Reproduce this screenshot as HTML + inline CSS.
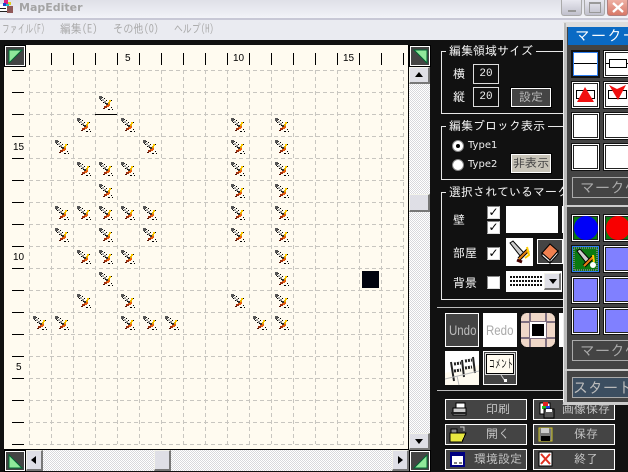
<!DOCTYPE html>
<html><head><meta charset="utf-8"><style>
html,body{margin:0;padding:0;width:628px;height:472px;overflow:hidden;background:#111}
body{position:relative;font-family:"Liberation Sans","IPAGothic","Noto Sans CJK JP",sans-serif}
div,span.a{position:absolute;box-sizing:border-box}
.jp{font-family:"IPAGothic","Noto Sans CJK JP",sans-serif;white-space:nowrap}
.w{color:#f4f4f4;font-size:12px;line-height:14px}
.m{top:22px;color:#aaa;font-size:12px;line-height:14px;transform-origin:0 0}
.g{border:1px solid #e8e8e8;left:441px;width:140px}
.lb{left:446px;background:#111;padding:0 3px;color:#f4f4f4;font-size:12px;line-height:14px;height:14px}
.in{left:473px;width:26px;height:20px;border:1px solid #ddd;color:#eee;font:11px/18px "Liberation Mono",monospace;text-align:center}
.ck{left:487px;width:13px;height:13px;background:#fff;border:1px solid #888;border-right-color:#ddd;border-bottom-color:#ddd;color:#000;font:bold 12px/11px "DejaVu Sans",sans-serif;text-align:center}
.bt{background:#444;border:1px solid #fff;outline:1px solid #000;color:#bbb;text-align:center;font-size:12px}
.b{width:82px;height:21px;background:#444;border:1px solid #fff;color:#c4c4c4;font-size:12px;line-height:19px}
.b span{position:absolute;top:0}
.t{width:29px;height:28px;background:#fff;border:1px solid #111;box-shadow:inset 0 0 0 1px #fff,inset 0 0 0 2px #222}
.p{background:#8080ff;box-shadow:inset 0 0 0 1px #fff,inset 0 0 0 2px #222}
.c{background:#0a7a12;box-shadow:inset 0 0 0 1px #fff,inset 0 0 0 2px #222}
.mk{left:572px;width:70px;height:21px;background:#444;border:1px solid #aaa;color:#aaa;font-size:15px;line-height:19px;padding-left:7px}
.h{background:repeating-conic-gradient(#d8d8dc 0 25%,#fff 0 50%) 0 0/2px 2px}
.sb{background:#dfdfe6;border:1px solid #f2f2ea;border-right:2px solid #777;border-bottom:2px solid #777}
.wb{top:0;width:21px;height:16px;border:1px solid #aaa;border-top:0;border-radius:0 0 3px 3px;background:linear-gradient(#e8e8f0,#c0c0cc)}
.cb{width:20px;height:20px;background:#444;border:1px solid #fff;outline:1px solid #000}
svg{position:absolute;overflow:visible}
.sx{display:inline-block;transform-origin:50% 50%}
</style></head><body>
<!-- title and menu -->
<div style="left:0;top:0;width:628px;height:18px;background:linear-gradient(#dfe0e8,#f2f3f8)"></div>
<div style="left:0;top:18px;width:628px;height:2px;background:#c8c8d6"></div>
<div style="left:0;top:20px;width:628px;height:20px;background:#eaebf1"></div>
<svg style="left:0;top:0" width="14" height="14" shape-rendering="crispEdges"><rect x="0" y="4" width="8" height="8" fill="#fff"/><rect x="4" y="0" width="4" height="4" fill="#e02080"/><rect x="8" y="2" width="3" height="3" fill="#e0d020"/><rect x="3" y="3" width="3" height="3" fill="#2040d0"/><rect x="7" y="6" width="6" height="7" fill="#905858"/><rect x="6" y="4" width="3" height="2" fill="#20c0c0"/><rect x="0" y="8" width="6" height="1" fill="#222"/><rect x="0" y="11" width="7" height="1" fill="#222"/></svg>
<div style="left:19px;top:0;font:bold 11px/15px 'DejaVu Sans',sans-serif;color:#a4a4a4;white-space:nowrap">MapEditer</div>
<div class="wb" style="left:561px"><div style="left:6px;top:10px;width:8px;height:2px;background:#999"></div></div>
<div class="wb" style="left:584px"><div style="left:4px;top:2px;width:12px;height:11px;border:1px solid #999;border-top-width:2px"></div></div>
<div class="wb" style="left:607px;width:21px;background:linear-gradient(#eeb0a4,#d87868);border-color:#b08080"><svg style="left:4px;top:2px" width="12" height="11"><path d="M1 1L11 10M11 1L1 10" stroke="#fff" stroke-width="2.4"/></svg></div>
<div class="jp m" style="left:2px;transform:scaleX(.65)">ファイル(F)</div>
<div class="jp m" style="left:60px;transform:scaleX(.9)">編集(E)</div>
<div class="jp m" style="left:113px;transform:scaleX(.85)">その他(O)</div>
<div class="jp m" style="left:174px;transform:scaleX(.74)">ヘルプ(H)</div>

<!-- map area -->
<div style="left:4px;top:45px;width:404px;height:404px;background:#fffbf0"></div>
<svg style="left:0;top:0" width="628" height="472" shape-rendering="crispEdges">
<defs><g id="s">
<rect x="0" y="0" width="3" height="3" fill="#555"/><rect x="3" y="1" width="1" height="1" fill="#222"/><rect x="1" y="3" width="1" height="1" fill="#222"/><rect x="3" y="3" width="2" height="2" fill="#aaa"/><rect x="5" y="2" width="1" height="1" fill="#000"/><rect x="2" y="4" width="1" height="1" fill="#000"/><rect x="5" y="5" width="2" height="2" fill="#888"/><rect x="7" y="4" width="1" height="1" fill="#000"/><rect x="4" y="6" width="1" height="1" fill="#000"/><rect x="6" y="7" width="1" height="1" fill="#000"/><rect x="7" y="7" width="2" height="2" fill="#333"/>
<rect x="10" y="4" width="2" height="2" fill="#fc0"/><rect x="9" y="6" width="2" height="2" fill="#e8b000"/><rect x="9" y="8" width="2" height="2" fill="#e86010"/><rect x="7" y="9" width="3" height="2" fill="#e86010"/><rect x="5" y="10" width="3" height="2" fill="#a03010"/><rect x="4" y="12" width="2" height="1" fill="#501000"/><rect x="12" y="11" width="1" height="1" fill="#000"/><rect x="13" y="13" width="1" height="1" fill="#000"/><rect x="9" y="13" width="2" height="1" fill="#000"/><rect x="12" y="4" width="1" height="1" fill="#000"/>
</g></defs>
<path stroke="#c8c6c0" stroke-dasharray="4 3" fill="none" d="M29.5 70V444M51.5 70V444M73.5 70V444M95.5 70V444M117.5 70V444M139.5 70V444M161.5 70V444M183.5 70V444M205.5 70V444M227.5 70V444M249.5 70V444M271.5 70V444M293.5 70V444M315.5 70V444M337.5 70V444M359.5 70V444M381.5 70V444M403.5 70V444M29 70.5H404M29 92.5H404M29 114.5H404M29 136.5H404M29 158.5H404M29 180.5H404M29 202.5H404M29 224.5H404M29 246.5H404M29 268.5H404M29 290.5H404M29 312.5H404M29 334.5H404M29 356.5H404M29 378.5H404M29 400.5H404M29 422.5H404M29 444.5H404"/>
<path stroke="#000" fill="none" d="M29.5 53V65M51.5 53V65M73.5 53V65M95.5 53V65M117.5 53V65M139.5 53V65M161.5 53V65M183.5 53V65M205.5 53V65M227.5 53V65M249.5 53V65M271.5 53V65M293.5 53V65M315.5 53V65M337.5 53V65M359.5 53V65M381.5 53V65M403.5 53V65M12 70.5H24M12 92.5H24M12 114.5H24M12 136.5H24M12 158.5H24M12 180.5H24M12 202.5H24M12 224.5H24M12 246.5H24M12 268.5H24M12 290.5H24M12 312.5H24M12 334.5H24M12 356.5H24M12 378.5H24M12 400.5H24M12 422.5H24M12 444.5H24M95 114.5H117"/>
<use href="#s" x="99" y="96"/>
<use href="#s" x="77" y="118"/><use href="#s" x="121" y="118"/><use href="#s" x="231" y="118"/><use href="#s" x="275" y="118"/>
<use href="#s" x="55" y="140"/><use href="#s" x="143" y="140"/><use href="#s" x="231" y="140"/><use href="#s" x="275" y="140"/>
<use href="#s" x="77" y="162"/><use href="#s" x="99" y="162"/><use href="#s" x="121" y="162"/><use href="#s" x="231" y="162"/><use href="#s" x="275" y="162"/>
<use href="#s" x="99" y="184"/><use href="#s" x="231" y="184"/><use href="#s" x="275" y="184"/>
<use href="#s" x="55" y="206"/><use href="#s" x="77" y="206"/><use href="#s" x="99" y="206"/><use href="#s" x="121" y="206"/><use href="#s" x="143" y="206"/><use href="#s" x="231" y="206"/><use href="#s" x="275" y="206"/>
<use href="#s" x="55" y="228"/><use href="#s" x="99" y="228"/><use href="#s" x="143" y="228"/><use href="#s" x="231" y="228"/><use href="#s" x="275" y="228"/>
<use href="#s" x="77" y="250"/><use href="#s" x="99" y="250"/><use href="#s" x="121" y="250"/><use href="#s" x="275" y="250"/>
<use href="#s" x="99" y="272"/><use href="#s" x="275" y="272"/>
<use href="#s" x="77" y="294"/><use href="#s" x="121" y="294"/><use href="#s" x="231" y="294"/><use href="#s" x="275" y="294"/>
<use href="#s" x="33" y="316"/><use href="#s" x="55" y="316"/><use href="#s" x="121" y="316"/><use href="#s" x="143" y="316"/><use href="#s" x="165" y="316"/><use href="#s" x="253" y="316"/><use href="#s" x="275" y="316"/>
<rect x="362" y="271" width="17" height="17" fill="#00030f"/>
</svg>
<div style="left:125px;top:52px;font-size:10px;line-height:13px;color:#000">5</div>
<div style="left:233px;top:52px;font-size:10px;line-height:13px;color:#000">10</div>
<div style="left:343px;top:52px;font-size:10px;line-height:13px;color:#000">15</div>
<div style="left:13px;top:141px;font-size:10px;line-height:13px;color:#000">15</div>
<div style="left:13px;top:251px;font-size:10px;line-height:13px;color:#000">10</div>
<div style="left:16px;top:361px;font-size:10px;line-height:13px;color:#000">5</div>

<!-- corner buttons -->
<div class="cb" style="left:5px;top:46px"><svg style="left:3px;top:3px" width="13" height="13"><path d="M0 0H13L0 13Z" fill="#8fe89a" stroke="#063"/></svg></div>
<div class="cb" style="left:410px;top:46px"><svg style="left:3px;top:3px" width="13" height="13"><path d="M0 0H13V13Z" fill="#8fe89a" stroke="#063"/></svg></div>
<div class="cb" style="left:5px;top:451px"><svg style="left:3px;top:3px" width="13" height="13"><path d="M0 0V13H13Z" fill="#8fe89a" stroke="#063"/></svg></div>
<div class="cb" style="left:410px;top:451px"><svg style="left:3px;top:3px" width="13" height="13"><path d="M13 0V13H0Z" fill="#8fe89a" stroke="#063"/></svg></div>

<!-- scrollbars -->
<div style="left:408px;top:45px;width:1px;height:405px;background:#000"></div>
<div class="h" style="left:409px;top:84px;width:21px;height:349px"></div>
<div class="sb" style="left:409px;top:67px;width:21px;height:17px"><svg style="left:5px;top:4px" width="9" height="6"><path d="M4 0L8 5H0Z" fill="#000"/></svg></div>
<div class="sb" style="left:409px;top:194px;width:21px;height:18px"></div>
<div class="sb" style="left:409px;top:433px;width:21px;height:17px"><svg style="left:5px;top:5px" width="9" height="6"><path d="M0 0H8L4 5Z" fill="#000"/></svg></div>
<div style="left:4px;top:449px;width:405px;height:1px;background:#000"></div>
<div class="h" style="left:43px;top:450px;width:349px;height:21px"></div>
<div class="sb" style="left:26px;top:450px;width:17px;height:21px"><svg style="left:4px;top:5px" width="6" height="9"><path d="M5 0V8L0 4Z" fill="#000"/></svg></div>
<div class="sb" style="left:154px;top:450px;width:17px;height:21px"></div>
<div class="sb" style="left:392px;top:450px;width:17px;height:21px"><svg style="left:5px;top:5px" width="6" height="9"><path d="M0 0V8L5 4Z" fill="#000"/></svg></div>

<!-- group 1 -->
<div class="g" style="top:51px;height:63px"></div>
<div class="jp lb" style="top:44px">編集領域サイズ</div>
<div class="jp w" style="left:453px;top:67px">横</div>
<div class="in" style="top:64px">20</div>
<div class="jp w" style="left:453px;top:90px">縦</div>
<div class="in" style="top:87px">20</div>
<div class="jp bt" style="left:511px;top:88px;width:40px;height:19px;line-height:17px">設定</div>
<!-- group 2 -->
<div class="g" style="top:126px;height:54px"></div>
<div class="jp lb" style="top:119px">編集ブロック表示</div>
<div style="left:452px;top:140px;width:12px;height:12px;border-radius:50%;background:#fff;border:1px solid #888"><div style="left:3px;top:3px;width:4px;height:4px;border-radius:50%;background:#000"></div></div>
<div style="left:468px;top:139px;font:10px/14px 'DejaVu Sans',sans-serif;color:#eee">Type1</div>
<div style="left:452px;top:159px;width:12px;height:12px;border-radius:50%;background:#fff;border:1px solid #888"></div>
<div style="left:468px;top:158px;font:10px/14px 'DejaVu Sans',sans-serif;color:#eee">Type2</div>
<div class="jp bt" style="left:511px;top:154px;width:40px;height:19px;line-height:17px;background:#c8c4b8;color:#444">非表示</div>
<!-- group 3 -->
<div class="g" style="top:192px;height:108px"></div>
<div class="jp lb" style="top:185px">選択されているマーク</div>
<div class="jp w" style="left:453px;top:213px">壁</div>
<div class="jp w" style="left:453px;top:246px">部屋</div>
<div class="jp w" style="left:453px;top:276px">背景</div>
<div class="ck" style="top:206px">✓</div>
<div class="ck" style="top:221px">✓</div>
<div class="ck" style="top:247px">✓</div>
<div class="ck" style="top:276px"></div>
<div style="left:506px;top:206px;width:52px;height:27px;background:#fff"></div>
<div style="left:562px;top:206px;width:2px;height:27px;background:#fff"></div>
<div style="left:506px;top:238px;width:27px;height:28px;background:#fff"></div>
<svg style="left:506px;top:238px" width="27" height="28"><path d="M4 5L7 3L19 16L15 19Z" fill="#ccc" stroke="#000"/><path d="M13 21L22 12" stroke="#000" stroke-width="4"/><path d="M13 21L22 12" stroke="#e88010" stroke-width="2"/><path d="M21 9L23 17L19 20" stroke="#fc0" stroke-width="2" fill="none"/><path d="M11 22L16 24" stroke="#400" stroke-width="3"/></svg>
<div style="left:537px;top:239px;width:26px;height:25px;background:#444;border:1px solid #fff"></div>
<svg style="left:537px;top:239px" width="26" height="25"><path d="M5 14L13 5L21 12L13 21Z" fill="#f08050" stroke="#000"/><path d="M5 14L13 21V24L5 17Z" fill="#eee" stroke="#000"/><path d="M13 21L21 12V15L13 24Z" fill="#eee" stroke="#000"/></svg>
<div style="left:506px;top:271px;width:56px;height:21px;background:#fff"></div>
<svg style="left:510px;top:276px" width="32" height="12" shape-rendering="crispEdges"><path d="M0 1H32M0 5H32M0 9H32" stroke="#111" stroke-width="2" stroke-dasharray="2 1"/></svg>
<div class="sb" style="left:544px;top:273px;width:17px;height:17px"><svg style="left:4px;top:5px" width="9" height="6"><path d="M0 0H8L4 5Z" fill="#000"/></svg></div>

<div style="left:437px;top:307px;width:130px;height:1px;background:#bbb"></div>
<div style="left:437px;top:390px;width:130px;height:1px;background:#bbb"></div>
<!-- tool buttons -->
<div style="left:445px;top:313px;width:34px;height:34px;background:#444;border:1px solid #fff;color:#bbb;font-size:14px;line-height:32px;text-align:center"><span class="sx" style="transform:scaleX(.82)">Undo</span></div>
<div style="left:483px;top:313px;width:34px;height:34px;background:#fff;color:#aaa;font-size:14px;line-height:34px;text-align:center"><span class="sx" style="transform:scaleX(.82)">Redo</span></div>
<svg style="left:521px;top:313px" width="34" height="34" shape-rendering="crispEdges"><rect width="34" height="34" rx="6" fill="#f0d8c8"/><path d="M9 0V34M25 0V34M0 9H34M0 25H34" stroke="#807080" stroke-width="2"/><rect x="9" y="9" width="16" height="16" fill="#fff"/><rect x="11" y="11" width="12" height="12" fill="#000"/></svg>
<div style="left:559px;top:313px;width:6px;height:34px;background:#fff"></div>
<svg style="left:445px;top:351px" width="34" height="34"><rect width="34" height="34" fill="#fff"/><path d="M0 22L34 14L34 34H0Z" fill="#fffbf0"/><path d="M6 11L9 30M17 9L19 26M28 6L30 22" stroke="#222" stroke-width="2"/><path d="M9 13L16 12M9 20L16 19M20 10L27 9M20 17L27 16" stroke="#222" stroke-width="3" stroke-dasharray="2 1"/><path d="M0 28L34 20M12 25L14 34" stroke="#bbb"/></svg>
<div style="left:483px;top:351px;width:34px;height:34px;background:#444;border:1px solid #fff"></div>
<div class="jp" style="left:486px;top:354px;width:28px;height:20px;background:#fffbf0;border:1px solid #000;box-shadow:0 0 0 1px #ddd;color:#000;font-size:12px;line-height:18px;text-align:center;overflow:visible"><span class="sx" style="position:absolute;left:-10px;width:48px;transform:scaleX(.5)">コメント</span></div>
<svg style="left:483px;top:351px" width="34" height="34"><path d="M18 24L22 30" stroke="#ccc"/><rect x="21" y="28" width="3" height="3" fill="#fff"/></svg>

<!-- bottom buttons -->
<div class="jp b" style="left:445px;top:399px"><span style="left:40px">印刷</span></div>
<div class="jp b" style="left:533px;top:399px"><span style="left:28px">画像保存</span></div>
<div class="jp b" style="left:445px;top:424px"><span style="left:40px">開く</span></div>
<div class="jp b" style="left:533px;top:424px"><span style="left:40px">保存</span></div>
<div class="jp b" style="left:445px;top:449px"><span style="left:28px">環境設定</span></div>
<div class="jp b" style="left:533px;top:449px"><span style="left:40px">終了</span></div>
<svg style="left:0;top:0" width="628" height="472" shape-rendering="crispEdges">
<rect x="453" y="408" width="13" height="7" fill="#ccc" stroke="#000"/><rect x="456" y="403" width="9" height="5" fill="#fff" stroke="#000"/><rect x="451" y="412" width="15" height="2" fill="#222"/>
<path d="M450 433H466L462 442H450Z" fill="#e8e840" stroke="#000"/><path d="M451 429H457V433H451Z" fill="#888" stroke="#000"/><path d="M460 427H464V431" stroke="#ccc" fill="none"/>
<rect x="540" y="403" width="10" height="11" fill="#fff" stroke="#000"/><rect x="543" y="402" width="5" height="4" fill="#e02020"/><rect x="542" y="406" width="4" height="3" fill="#20c020"/><rect x="546" y="406" width="4" height="3" fill="#2040e0"/><rect x="544" y="409" width="10" height="9" fill="#555" stroke="#000"/><rect x="546" y="409" width="6" height="3" fill="#fff"/>
<rect x="539" y="428" width="13" height="13" fill="#777" stroke="#c8c020"/><rect x="541" y="428" width="8" height="5" fill="#ccc"/><rect x="541" y="436" width="9" height="5" fill="#000"/>
<rect x="451" y="453" width="13" height="13" fill="#fff" stroke="#000080" stroke-width="2"/><rect x="451" y="453" width="13" height="3" fill="#000080"/><path d="M454 463H457M459 463H462" stroke="#000"/>
<rect x="539" y="452" width="13" height="14" fill="#fff" stroke="#000"/>
</svg>
<svg style="left:539px;top:452px" width="13" height="14"><path d="M2 2L11 12M11 2L2 12" stroke="#e03020" stroke-width="2"/></svg>

<!-- floating window -->
<div style="left:563px;top:22px;width:65px;height:383px;background:#444;border-left:1px solid #eee;border-top:1px solid #ddd;box-shadow:inset 3px 0 0 #bbb"></div>
<div style="left:563px;top:402px;width:65px;height:3px;background:#ccc"></div>
<div style="left:566px;top:23px;width:62px;height:4px;background:#ddd"></div>
<div class="jp" style="left:568px;top:27px;width:60px;height:18px;background:#0a6ac4;color:#fff;font-size:15px;line-height:18px;padding-left:7px;overflow:hidden;letter-spacing:1px">マーク一</div>
<div class="t" style="left:571px;top:50px;box-shadow:none;border:2px solid #111;background:#fff"><div style="left:0;top:0;width:25px;height:24px;border:1px solid #3080f0"></div><div style="left:1px;top:11px;width:23px;height:1px;background:#000"></div></div>
<div class="t" style="left:603px;top:50px;width:30px"><div style="left:2px;top:12px;width:24px;height:1px;background:#000"></div><div style="left:5px;top:8px;width:18px;height:9px;border:1px solid #000;background:#fff"></div></div>
<div class="t" style="left:571px;top:81px"><div style="left:4px;top:8px;width:19px;height:9px;border:1px solid #000"></div><svg style="left:5px;top:5px" width="17" height="16"><path d="M8 0L17 15H0Z" fill="#f01010"/></svg></div>
<div class="t" style="left:603px;top:81px;width:30px"><div style="left:4px;top:8px;width:19px;height:9px;border:1px solid #000"></div><svg style="left:5px;top:3px" width="17" height="16"><path d="M0 0L8 4L17 0L9 15Z" fill="#f01010"/></svg></div>
<div class="t" style="left:571px;top:112px"></div>
<div class="t" style="left:603px;top:112px;width:30px"></div>
<div class="t" style="left:571px;top:143px"></div>
<div class="t" style="left:603px;top:143px;width:30px"></div>
<div class="jp mk" style="top:177px">マーク作</div>
<div style="left:565px;top:205px;width:63px;height:2px;background:#ccc"></div>
<div class="t c" style="left:571px;top:214px"><div style="left:2px;top:1px;width:24px;height:24px;border-radius:50%;background:#0000f8"></div></div>
<div class="t c" style="left:603px;top:214px;width:30px"><div style="left:2px;top:1px;width:24px;height:24px;border-radius:50%;background:#f80000"></div></div>
<div class="t c" style="left:571px;top:245px;box-shadow:none;border:2px solid #111;outline:1px solid #3080f0;outline-offset:-2px"></div>
<svg style="left:571px;top:245px" width="29" height="28"><path d="M6 6L9 4L20 16L16 19Z" fill="#ccc" stroke="#000"/><path d="M13 21L22 12" stroke="#000" stroke-width="4"/><path d="M13 21L22 12" stroke="#e88010" stroke-width="2"/><path d="M22 10L23 17" stroke="#fc0" stroke-width="2"/><circle cx="22" cy="20" r="3" fill="#fff"/><rect x="3" y="3" width="23" height="22" fill="none" stroke="#d080d0" stroke-dasharray="1 1"/></svg>
<div class="t p" style="left:603px;top:245px;width:30px"></div>
<div class="t p" style="left:571px;top:276px"></div>
<div class="t p" style="left:603px;top:276px;width:30px"></div>
<div class="t p" style="left:571px;top:307px"></div>
<div class="t p" style="left:603px;top:307px;width:30px"></div>
<div class="jp mk" style="top:340px">マーク作</div>
<div style="left:565px;top:369px;width:63px;height:2px;background:#ccc"></div>
<div class="jp mk" style="top:377px;background:#3c4e60;color:#bbb;padding-left:0">スタート</div>
</body></html>
